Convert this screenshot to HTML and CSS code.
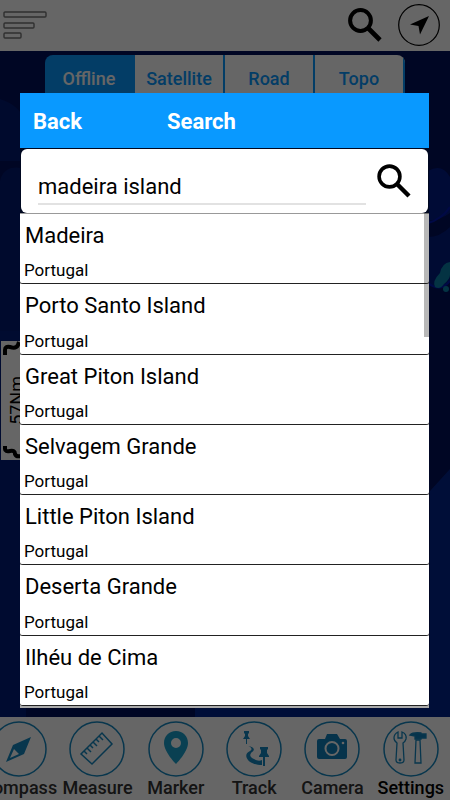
FILE: index.html
```html
<!DOCTYPE html>
<html lang="en">

<head>
    <meta charset="UTF-8">
    <meta name="viewport" content="width=device-width, initial-scale=1.0">
    <title>Search</title>
    <link rel="stylesheet" href="styles.css">
</head>

<body>

    <div class="app">
        <header class="top-bar">
            <button class="icon-button" aria-label="Menu">
                <svg width="44" height="30" viewBox="0 0 44 30" fill="none" stroke="#777" stroke-width="1.4">
                    <rect x="1" y="2" width="42" height="5" rx="1" />
                    <rect x="1" y="13" width="30" height="5" rx="1" />
                    <rect x="1" y="23" width="17" height="5" rx="1" />
                </svg>
            </button>
            <div class="top-actions">
                <button class="icon-button" aria-label="Search">
                    <svg width="34" height="34" viewBox="0 0 34 34" fill="none" stroke="#000">
                        <circle cx="12.5" cy="12.5" r="10.4" stroke-width="4" />
                        <path d="M20.5 20.5L32 32" stroke-width="4.6" />
                    </svg>
                </button>
                <button class="icon-button" aria-label="My location">
                    <svg width="42" height="42" viewBox="0 0 42 42">
                        <circle cx="21" cy="21" r="20.3" fill="none" stroke="#000" stroke-width="1.2" />
                        <path d="M31 12L12 20.5L20.5 22L22 30.5Z" fill="#000" />
                    </svg>
                </button>
            </div>
        </header>

        <main class="map">
            <svg class="map-shapes" aria-hidden="true">
                <path d="M0 48Q20 54 26 72V110H0Z" fill="#001a70" />
                <path d="M0 130Q4 112 26 118V666H0Z" fill="#001a70" />
                <path d="M0 280H26V666H0Z" fill="#001c78" />
                <path d="M430 440L450 418V666H195V650H430Z" fill="#00258c" />
                <path d="M428 120Q442 112 450 126V162Q442 168 428 170Z" fill="#001c88" />
                <path d="M428 186Q440 186 450 176V230Q440 242 428 232Z" fill="#001c80" />
                <path d="M428 172Q442 168 450 156M428 232Q440 242 450 230" fill="none" stroke="#0018b0" stroke-width="2" />
                <path d="M450 211Q442 212 440 222Q432 230 435 236Q440 239 444 233Q450 228 450 224Z" fill="#0a80a8" />
                <circle cx="446" cy="238" r="3" fill="#0a80a8" />
            </svg>
            <nav class="tabs">
                <button class="tab active">Offline</button>
                <button class="tab">Satellite</button>
                <button class="tab">Road</button>
                <button class="tab">Topo</button>
            </nav>
            <div class="scale">
                <svg width="24" height="14" viewBox="0 0 24 14" fill="none" stroke="#000" stroke-width="4">
                    <path d="M4 14V9Q4 5 9 6Q15 8 17 4L18 1" />
                </svg>
                <span class="scale-text">57Nm</span>
                <svg width="24" height="14" viewBox="0 0 24 14" fill="none" stroke="#000" stroke-width="4">
                    <path d="M4 0V3Q4 6 9 5Q14 4 14 8Q15 11 20 10" />
                </svg>
            </div>
        </main>

        <nav class="bottom-bar">
            <a class="nav-item" href="#">
                <svg width="56" height="56" viewBox="0 0 56 56">
                    <circle cx="28" cy="28" r="27" fill="none" stroke="#1688c0" stroke-width="1.5" />
                    <path d="M40 16L33 33L15 41L22 24ZM23 28L19 37L28 33Z" fill="#1688c0" fill-rule="evenodd" />
                </svg>
                <span>Compass</span>
            </a>
            <a class="nav-item" href="#">
                <svg width="56" height="56" viewBox="0 0 56 56" fill="none" stroke="#1688c0" stroke-width="1.5">
                    <circle cx="28" cy="28" r="27" />
                    <path d="M12 33L33 12L43 23L23 43Z" />
                    <path d="M15 30L18 33M18 27L22 31M21 24L24 27M24 21L28 25M27 18L30 21M30 15L34 19" />
                </svg>
                <span>Measure</span>
            </a>
            <a class="nav-item" href="#">
                <svg width="56" height="56" viewBox="0 0 56 56">
                    <circle cx="28" cy="28" r="27" fill="none" stroke="#1688c0" stroke-width="1.5" />
                    <path d="M28 10C21 10 16 15 16 22C16 31 28 43 28 43C28 43 40 31 40 22C40 15 35 10 28 10ZM28 17A5 5 0 1 1 28 27A5 5 0 1 1 28 17Z" fill="#1ba0cc" fill-rule="evenodd" />
                </svg>
                <span>Marker</span>
            </a>
            <a class="nav-item" href="#">
                <svg width="56" height="56" viewBox="0 0 56 56">
                    <circle cx="28" cy="28" r="27" fill="none" stroke="#1688c0" stroke-width="1.5" />
                    <path d="M18 10H23V12L22 13V15L24 18H17L19 15V13L18 12ZM20 18H21V23H20ZM34 26H42V28L41 29V32L43 35V36H39V45H37V36H33V35L35 32V29L34 28Z" fill="#1688c0" />
                    <path d="M22 25C27 26 30 28 26 31C23 34 24 36 28 38C31 40 34 40 36 39V44C30 44 24 42 22 39C19 35 20 32 24 30C27 28 25 26 22 25Z" fill="#1688c0" />
                </svg>
                <span>Track</span>
            </a>
            <a class="nav-item" href="#">
                <svg width="56" height="56" viewBox="0 0 56 56">
                    <circle cx="28" cy="28" r="27" fill="none" stroke="#1688c0" stroke-width="1.5" />
                    <path d="M15 18H21L23 13H33L36 18H41Q43 18 43 20V36Q43 38 41 38H15Q13 38 13 36V20Q13 18 15 18Z" fill="#1080bc" />
                    <circle cx="28" cy="27.500" r="6.500" fill="none" stroke="#fff" stroke-width="2" />
                    <circle cx="39" cy="22" r="1.300" fill="#fff" />
                </svg>
                <span>Camera</span>
            </a>
            <a class="nav-item current" href="#">
                <svg width="56" height="56" viewBox="0 0 56 56" fill="none" stroke="#1688c0" stroke-width="1.3">
                    <circle cx="28" cy="28" r="27" stroke-width="1.5" />
                    <path d="M15 11V17H19V11Q24 13 23 18Q22 21 20 22L21 39Q21 42 17 42Q13 42 13 39L14 22Q11 20 11 17Q11 13 15 11Z" />
                    <path d="M33 19H37L38 42H32Z" />
                    <path d="M27 14Q30 11 38 12V13H43V17H38V18H32V15Z" fill="#1080bc" />
                    <circle cx="17" cy="39" r=".8" />
                </svg>
                <span>Settings</span>
            </a>
        </nav>
    </div>

    <div class="overlay">
        <section class="dialog" role="dialog" aria-label="Search">
            <div class="dialog-header">
                <button class="back-button">Back</button>
                <h1 class="dialog-title">Search</h1>
            </div>
            <form class="search-box">
                <input class="search-input" type="text" aria-label="Place name" value="madeira island">
                <button class="icon-button" type="button" aria-label="Search">
                    <svg width="34" height="34" viewBox="0 0 34 34" fill="none" stroke="#000">
                        <circle cx="12.5" cy="12.5" r="10.4" stroke-width="3.6" />
                        <path d="M20.5 20.5L32 32" stroke-width="4.4" />
                    </svg>
                </button>
            </form>
            <div class="results-wrap">
                <ul class="results">
                    <li class="result"><span class="place">Madeira</span><span class="country">Portugal</span></li>
                    <li class="result"><span class="place">Porto Santo Island</span><span class="country">Portugal</span></li>
                    <li class="result"><span class="place">Great Piton Island</span><span class="country">Portugal</span></li>
                    <li class="result"><span class="place">Selvagem Grande</span><span class="country">Portugal</span></li>
                    <li class="result"><span class="place">Little Piton Island</span><span class="country">Portugal</span></li>
                    <li class="result"><span class="place">Deserta Grande</span><span class="country">Portugal</span></li>
                    <li class="result"><span class="place">Ilhéu de Cima</span><span class="country">Portugal</span></li>
                </ul>
                <div class="scroll-thumb"></div>
            </div>
        </section>
    </div>

</body>

</html>
```
FILE: styles.css
```css
* {
    margin: 0;
    padding: 0;
    box-sizing: border-box;
}

body {
    font-family: Roboto, "Liberation Sans", sans-serif;
    background-color: #000f5a;
    color: #000000;
}

button {
    font-family: inherit;
    border: none;
    background: none;
    cursor: pointer;
}

svg {
    display: block;
    flex-shrink: 0;
}

.app {
    display: flex;
    flex-direction: column;
    height: 100vh;
    overflow: hidden;
}

.top-bar {
    display: flex;
    justify-content: space-between;
    align-items: center;
    padding: 4px 10px 5px 3px;
    background-color: #ffffff;
}

.top-actions {
    display: flex;
    align-items: center;
    gap: 16px;
}

/* Map */
.map {
    position: relative;
    flex: 1;
    background-color: #000f5a;
}

.map-shapes {
    position: absolute;
    width: 100%;
    height: 100%;
}

.tabs {
    position: relative;
    display: flex;
    margin: 4px 45px 0;
    border-radius: 8px 8px 0 0;
    overflow: hidden;
}

.tab {
    flex: 1;
    height: 46px;
    font-size: 18px;
    font-weight: 500;
    background-color: #ffffff;
    color: #0999ff;
    border-right: 2px solid #0999ff;
}

.tab.active {
    background-color: #0999ff;
    color: #ffffff;
}

.scale {
    position: absolute;
    left: 1px;
    top: 290px;
    width: 32px;
    height: 119px;
    display: flex;
    flex-direction: column;
    justify-content: space-between;
    background-color: #ffffff;
}

.scale-text {
    align-self: center;
    writing-mode: vertical-rl;
    transform: rotate(180deg);
    font-size: 18px;
    line-height: 18px;
}

/* Bottom bar, scrolled a little to the right */
.bottom-bar {
    display: flex;
    margin-left: -20px;
    padding-top: 4px;
    background-color: #ffffff;
}

.nav-item {
    flex: 1;
    min-width: 0;
    display: flex;
    flex-direction: column;
    align-items: center;
    padding-bottom: 1px;
    font-size: 18px;
    font-weight: 500;
    line-height: 22px;
    text-decoration: none;
    color: #333333;
}

.nav-item.current {
    color: #000000;
}

/* Search dialog */
.overlay {
    position: fixed;
    inset: 0;
    display: flex;
    padding: 93px 21px 92px 20px;
    background-color: rgba(0, 0, 0, 0.6);
}

.dialog {
    flex: 1;
    display: flex;
    flex-direction: column;
    background-color: #000820;
}

.dialog-header {
    display: flex;
    align-items: center;
    gap: 85px;
    height: 55px;
    padding: 2px 13px 0;
    background-color: #0999ff;
    color: #ffffff;
}

.back-button,
.dialog-title {
    font-size: 22px;
    font-weight: 700;
    line-height: 28px;
    color: #ffffff;
}

.search-box {
    display: flex;
    align-items: center;
    gap: 11px;
    margin: 1px 1px 0;
    padding: 8px 17px;
    background-color: #ffffff;
    border-radius: 6px;
}

.search-input {
    flex: 1;
    min-width: 0;
    height: 48px;
    padding-top: 12px;
    border: none;
    border-bottom: 2px solid #e2e2e2;
    outline: none;
    background: none;
    font-family: inherit;
    font-size: 22px;
    color: #000000;
}

.results-wrap {
    position: relative;
    flex: 1;
    display: flex;
    padding-bottom: 2px;
    background-color: #aaaaaa;
}

.results {
    flex: 1;
    display: flex;
    flex-direction: column;
    list-style: none;
    border-top: 1px solid #999999;
}

.result {
    flex: 1;
    display: flex;
    flex-direction: column;
    justify-content: space-between;
    padding: 8px 4px 2px;
    background-color: #ffffff;
    border-bottom: 1px solid #222222;
    border-radius: 0 0 3px 3px;
}

.place {
    padding-left: 1px;
    font-size: 22px;
    line-height: 28px;
}

.country {
    font-size: 17px;
    line-height: 22px;
}

.scroll-thumb {
    position: absolute;
    top: 0;
    right: 0;
    width: 5px;
    height: 25%;
    background-color: rgba(0, 0, 0, 0.28);
}
```
